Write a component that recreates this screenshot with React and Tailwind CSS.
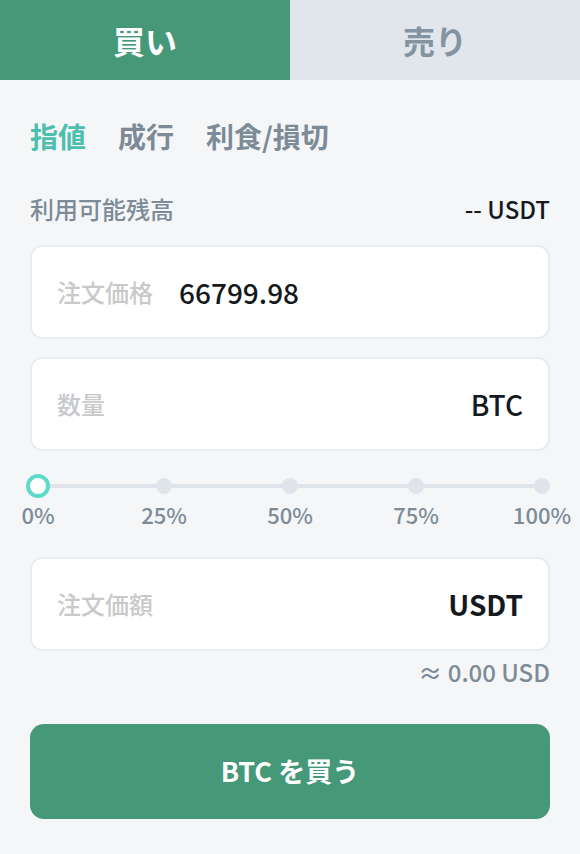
const font = { fontFamily: '"Noto Sans CJK JP", "Noto Sans", sans-serif' };

function Field({ label, value, unit, unitBold }) {
  return (
    <div className="flex h-[94px] items-center rounded-[12px] border-2 border-[#e9ecf0] bg-white pl-[25px] pr-[25px]">
      <span className="text-[24px] font-medium leading-none text-[#c8c9cb]">{label}</span>
      {value ? (
        <span className="ml-[26px] text-[28px] font-medium leading-none text-[#141920]">{value}</span>
      ) : null}
      {unit ? (
        <span
          className={`ml-auto text-[28px] leading-none text-[#141920] ${
            unitBold ? "font-bold" : "font-medium"
          }`}
        >
          {unit}
        </span>
      ) : null}
    </div>
  );
}

function Slider() {
  const marks = ["0%", "25%", "50%", "75%", "100%"];
  return (
    <div className="mt-[23px]">
      <div className="relative flex h-[24px] items-center justify-between">
        <div className="absolute left-[8px] right-[8px] top-[10px] h-[4px] bg-[#dfe4eb]" />
        {marks.map((m) => (
          <div key={m} className="relative h-[16px] w-[16px] rounded-full bg-[#dfe4eb]" />
        ))}
        <div className="absolute left-[-4px] top-0 h-[24px] w-[24px] rounded-full border-[4px] border-[#5fd9c9] bg-white" />
      </div>
      <div className="mt-[1px] flex justify-between">
        {marks.map((m) => (
          <div key={m} className="flex w-[16px] flex-col items-center">
            <span className="whitespace-nowrap text-[22px] font-medium leading-[30px] text-[#7d8b97]">
              {m}
            </span>
          </div>
        ))}
      </div>
    </div>
  );
}

export default function App() {
  return (
    <div className="h-[854px] w-[580px] overflow-hidden bg-[#f5f6f8]" style={font}>
      <div className="grid h-[80px] grid-cols-2">
        <div className="flex items-center justify-center bg-[#459878] text-[32px] font-bold text-white">
          買い
        </div>
        <div className="flex items-center justify-center bg-[#e1e5ec] text-[32px] font-bold text-[#8493a0]">
          売り
        </div>
      </div>

      <div className="px-[30px]">
        <div className="mt-[36px] flex gap-[32px] text-[28px] font-bold leading-[40px]">
          <span className="text-[#4dbfae]">指値</span>
          <span className="text-[#7c8b97]">成行</span>
          <span className="text-[#7c8b97]">利食/損切</span>
        </div>

        <div className="mt-[37px] flex items-center justify-between leading-[32px]">
          <span className="text-[24px] font-medium text-[#7c8b97]">利用可能残高</span>
          <span className="text-[24px] font-medium text-[#141920]">-- USDT</span>
        </div>

        <div className="mt-[20px] flex flex-col gap-[18px]">
          <Field label="注文価格" value="66799.98" />
          <Field label="数量" unit="BTC" />
        </div>

        <Slider />

        <div className="mt-[28px]">
          <Field label="注文価額" unit="USDT" unitBold />
        </div>

        <div className="mt-[6px] text-right text-[24px] font-medium leading-[30px] text-[#7d8b97]">
          ≈ 0.00 USD
        </div>

        <button className="mt-[37px] flex h-[95px] w-full items-center justify-center rounded-[14px] bg-[#459878] text-[27px] font-bold text-white">
          BTC を買う
        </button>
      </div>
    </div>
  );
}
